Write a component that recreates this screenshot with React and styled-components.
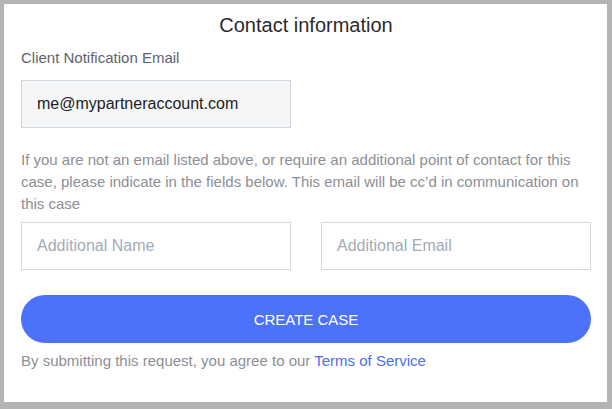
import React from 'react';
import styled, { createGlobalStyle } from 'styled-components';

const GlobalStyle = createGlobalStyle`
  html, body {
    margin: 0;
    padding: 0;
    background: #b4b4b4;
  }
  body {
    font-family: "Liberation Sans", Arial, sans-serif;
  }
`;

const Frame = styled.div`
  width: 612px;
  height: 409px;
  box-sizing: border-box;
  padding: 4px 5px 7px 4px;
  background: #b4b4b4;
`;

const Panel = styled.div`
  height: 100%;
  box-sizing: border-box;
  background: #fff;
  padding: 9px 16px 0 17px;
  display: flex;
  flex-direction: column;
`;

const Title = styled.h2`
  margin: 0;
  font-size: 20px;
  font-weight: 400;
  color: #2a2a2e;
  text-align: center;
  line-height: 24px;
`;

const Label = styled.div`
  margin-top: 12px;
  font-size: 15px;
  color: #5e636b;
  line-height: 18px;
`;

const Field = styled.div`
  box-sizing: border-box;
  width: 270px;
  height: 48px;
  margin-top: ${p => p.$top || 0}px;
  border: 1px solid #d3d9e2;
  background: ${p => (p.$filled ? '#f4f6f8' : '#fff')};
  color: ${p => (p.$filled ? '#222' : '#a3abb6')};
  font-size: 16px;
  display: flex;
  align-items: center;
  padding-left: 15px;
`;

const Note = styled.p`
  margin: 21px 0 0;
  font-size: 15px;
  line-height: 22px;
  color: #8c8f94;
`;

const Row = styled.div`
  display: flex;
  justify-content: space-between;
  margin-top: 7px;
`;

const Button = styled.button`
  margin-top: 25px;
  height: 48px;
  border: none;
  border-radius: 24px;
  background: #4c71fb;
  color: #fff;
  font-family: inherit;
  font-size: 15px;
  cursor: pointer;
`;

const Footer = styled.div`
  margin-top: 9px;
  font-size: 15px;
  line-height: 18px;
  color: #8c8f94;
`;

const Link = styled.a`
  color: #4c6ef5;
  text-decoration: none;
`;

export default function App() {
  return (
    <>
      <GlobalStyle />
      <Frame>
        <Panel>
          <Title>Contact information</Title>
          <Label>Client Notification Email</Label>
          <Field $filled $top={13}>me@mypartneraccount.com</Field>
          <Note>
            If you are not an email listed above, or require an additional point of contact for this
            case, please indicate in the fields below. This email will be cc’d in communication on
            this case
          </Note>
          <Row>
            <Field>Additional Name</Field>
            <Field>Additional Email</Field>
          </Row>
          <Button>CREATE CASE</Button>
          <Footer>
            By submitting this request, you agree to our <Link href="#">Terms of Service</Link>
          </Footer>
        </Panel>
      </Frame>
    </>
  );
}
